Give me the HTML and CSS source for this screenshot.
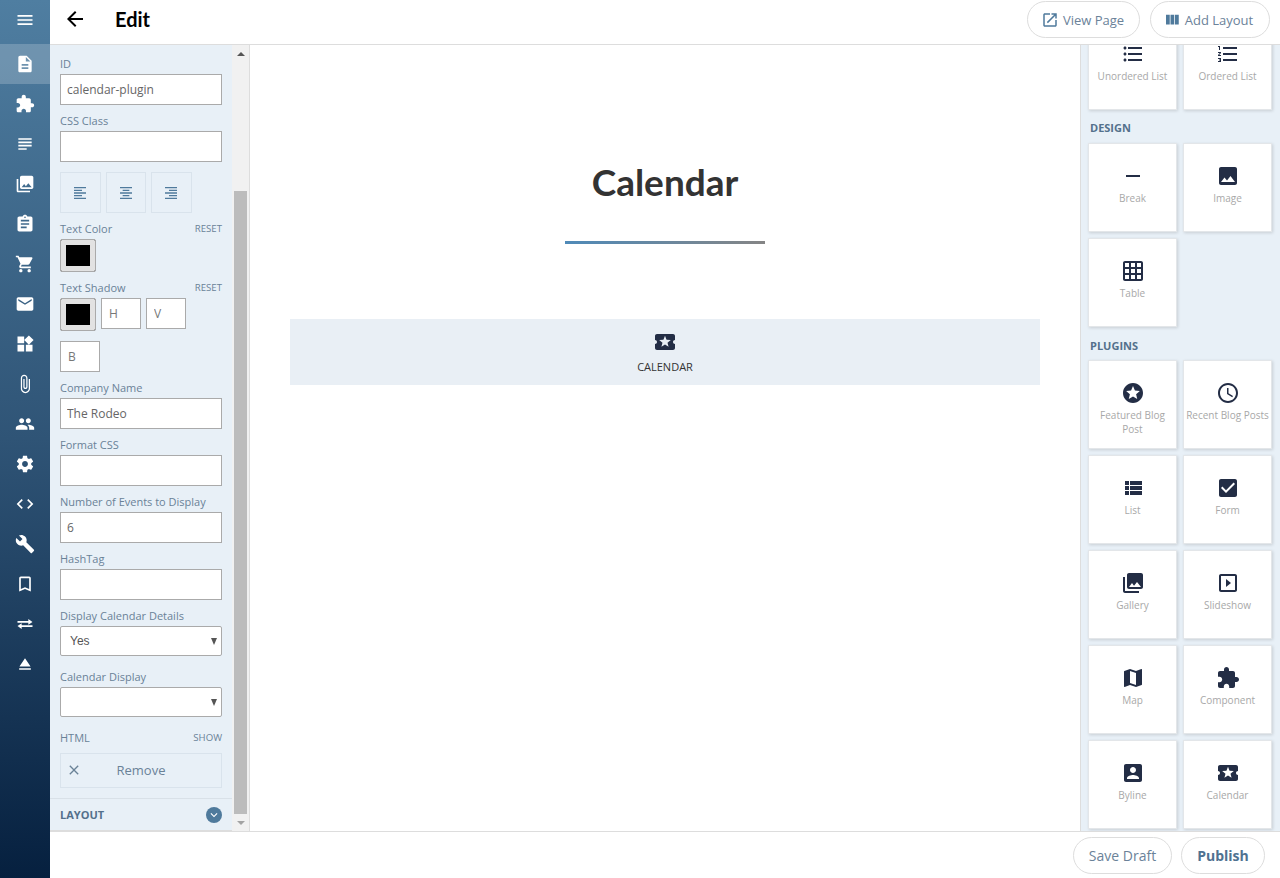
FILE: index.html
```html
<!DOCTYPE html>
<html lang="en">
<head>
<meta charset="utf-8">
<title>Edit</title>
<link rel="stylesheet" href="styles.css">
</head>
<body>
<svg class="sprite" aria-hidden="true">
<symbol id="i-menu" viewBox="0 0 24 24"><path d="M3 18h18v-2H3v2zm0-5h18v-2H3v2zm0-7v2h18V6H3z"/></symbol>
<symbol id="i-doc" viewBox="0 0 24 24"><path d="M14 2H6c-1.1 0-1.99.9-1.99 2L4 20c0 1.1.89 2 1.99 2H18c1.1 0 2-.9 2-2V8l-6-6zm2 16H8v-2h8v2zm0-4H8v-2h8v2zm-3-5V3.5L18.5 9H13z"/></symbol>
<symbol id="i-ext" viewBox="0 0 24 24"><path d="M20.5 11H19V7c0-1.1-.9-2-2-2h-4V3.5C13 2.12 11.88 1 10.5 1S8 2.12 8 3.5V5H4c-1.1 0-1.99.9-1.99 2v3.8H3.5c1.49 0 2.7 1.21 2.7 2.7s-1.21 2.7-2.7 2.7H2V20c0 1.1.9 2 2 2h3.8v-1.5c0-1.49 1.21-2.7 2.7-2.7 1.49 0 2.7 1.21 2.7 2.7V22H17c1.1 0 2-.9 2-2v-4h1.5c1.38 0 2.5-1.12 2.5-2.5S21.88 11 20.5 11z"/></symbol>
<symbol id="i-subject" viewBox="0 0 24 24"><path d="M14 17H4v2h10v-2zm6-8H4v2h16V9zM4 15h16v-2H4v2zM4 5v2h16V5H4z"/></symbol>
<symbol id="i-coll" viewBox="0 0 24 24"><path d="M22 16V4c0-1.1-.9-2-2-2H8c-1.1 0-2 .9-2 2v12c0 1.1.9 2 2 2h12c1.1 0 2-.9 2-2zm-11-4l2.03 2.71L16 11l4 5H8l3-4zM2 6v14c0 1.1.9 2 2 2h14v-2H4V6H2z"/></symbol>
<symbol id="i-assign" viewBox="0 0 24 24"><path d="M19 3h-4.18C14.4 1.84 13.3 1 12 1c-1.3 0-2.4.84-2.82 2H5c-1.1 0-2 .9-2 2v14c0 1.1.9 2 2 2h14c1.1 0 2-.9 2-2V5c0-1.1-.9-2-2-2zm-7 0c.55 0 1 .45 1 1s-.45 1-1 1-1-.45-1-1 .45-1 1-1zm2 14H7v-2h7v2zm3-4H7v-2h10v2zm0-4H7V7h10v2z"/></symbol>
<symbol id="i-cart" viewBox="0 0 24 24"><path d="M7 18c-1.1 0-1.99.9-1.99 2S5.9 22 7 22s2-.9 2-2-.9-2-2-2zM1 2v2h2l3.6 7.59-1.35 2.45c-.16.28-.25.61-.25.96 0 1.1.9 2 2 2h12v-2H7.42c-.14 0-.25-.11-.25-.25l.03-.12.9-1.63h7.45c.75 0 1.41-.41 1.75-1.03l3.58-6.49c.08-.14.12-.31.12-.48 0-.55-.45-1-1-1H5.21l-.94-2H1zm16 16c-1.1 0-1.99.9-1.99 2s.89 2 1.99 2 2-.9 2-2-.9-2-2-2z"/></symbol>
<symbol id="i-mail" viewBox="0 0 24 24"><path d="M20 4H4c-1.1 0-1.99.9-1.99 2L2 18c0 1.1.9 2 2 2h16c1.1 0 2-.9 2-2V6c0-1.1-.9-2-2-2zm0 4l-8 5-8-5V6l8 5 8-5v2z"/></symbol>
<symbol id="i-widgets" viewBox="0 0 24 24"><path d="M13 13v8h8v-8h-8zM3 21h8v-8H3v8zM3 3v8h8V3H3zm13.66-1.31L11 7.34 16.66 13l5.66-5.66-5.66-5.65z"/></symbol>
<symbol id="i-attach" viewBox="0 0 24 24"><path d="M16.5 6v11.5c0 2.21-1.79 4-4 4s-4-1.79-4-4V5c0-1.38 1.12-2.5 2.5-2.5s2.5 1.12 2.5 2.5v10.5c0 .55-.45 1-1 1s-1-.45-1-1V6H10v9.5c0 1.38 1.12 2.5 2.5 2.5s2.5-1.12 2.5-2.5V5c0-2.21-1.79-4-4-4S7 2.79 7 5v12.5c0 3.04 2.46 5.5 5.5 5.5s5.5-2.46 5.5-5.5V6h-1.5z"/></symbol>
<symbol id="i-people" viewBox="0 0 24 24"><path d="M16 11c1.66 0 2.99-1.34 2.99-3S17.66 5 16 5c-1.66 0-3 1.34-3 3s1.34 3 3 3zm-8 0c1.66 0 2.99-1.34 2.99-3S9.66 5 8 5C6.34 5 5 6.34 5 8s1.34 3 3 3zm0 2c-2.33 0-7 1.17-7 3.5V19h14v-2.5c0-2.33-4.67-3.5-7-3.5zm8 0c-.29 0-.62.02-.97.05 1.16.84 1.97 1.97 1.97 3.45V19h6v-2.5c0-2.33-4.67-3.5-7-3.5z"/></symbol>
<symbol id="i-settings" viewBox="0 0 24 24"><path d="M19.43 12.98c.04-.32.07-.64.07-.98s-.03-.66-.07-.98l2.11-1.65c.19-.15.24-.42.12-.64l-2-3.46c-.12-.22-.39-.3-.61-.22l-2.49 1c-.52-.4-1.08-.73-1.69-.98l-.38-2.65C14.46 2.18 14.25 2 14 2h-4c-.25 0-.46.18-.49.42l-.38 2.65c-.61.25-1.17.59-1.69.98l-2.49-1c-.23-.09-.49 0-.61.22l-2 3.46c-.13.22-.07.49.12.64l2.11 1.65c-.04.32-.07.65-.07.98s.03.66.07.98l-2.11 1.65c-.19.15-.24.42-.12.64l2 3.46c.12.22.39.3.61.22l2.49-1c.52.4 1.08.73 1.69.98l.38 2.65c.03.24.24.42.49.42h4c.25 0 .46-.18.49-.42l.38-2.65c.61-.25 1.17-.59 1.69-.98l2.49 1c.23.09.49 0 .61-.22l2-3.46c.12-.22.07-.49-.12-.64l-2.11-1.65zM12 15.5c-1.93 0-3.5-1.57-3.5-3.5s1.57-3.5 3.5-3.5 3.5 1.57 3.5 3.5-1.57 3.5-3.5 3.5z"/></symbol>
<symbol id="i-code" viewBox="0 0 24 24"><path d="M9.4 16.6L4.8 12l4.6-4.6L8 6l-6 6 6 6 1.4-1.4zm5.2 0l4.6-4.6-4.6-4.6L16 6l6 6-6 6-1.4-1.4z"/></symbol>
<symbol id="i-build" viewBox="0 0 24 24"><path d="M22.7 19l-9.1-9.1c.9-2.3.4-5-1.5-6.9-2-2-5-2.4-7.4-1.3L9 6 6 9 1.6 4.7C.4 7.1.9 10.1 2.9 12.1c1.9 1.9 4.6 2.4 6.9 1.5l9.1 9.1c.4.4 1 .4 1.4 0l2.3-2.3c.5-.4.5-1.1.1-1.4z"/></symbol>
<symbol id="i-bookmark" viewBox="0 0 24 24"><path d="M17 3H7c-1.1 0-1.99.9-1.99 2L5 21l7-3 7 3V5c0-1.1-.9-2-2-2zm0 15l-5-2.18L7 18V5h10v13z"/></symbol>
<symbol id="i-compare" viewBox="0 0 24 24"><path d="M3 8.5h13V6l5 3.5-5 3.5v-2.5H3zM21 15.5H8V18l-5-3.5L8 11v2.5h13z"/></symbol>
<symbol id="i-eject" viewBox="0 0 24 24"><path d="M5 17h14v2H5zm7-12L5.33 15h13.34z"/></symbol>
<symbol id="i-back" viewBox="0 0 24 24"><path d="M20 11H7.83l5.59-5.59L12 4l-8 8 8 8 1.41-1.41L7.83 13H20v-2z"/></symbol>
<symbol id="i-open" viewBox="0 0 24 24"><path d="M19 19H5V5h7V3H5c-1.11 0-2 .9-2 2v14c0 1.1.89 2 2 2h14c1.1 0 2-.9 2-2v-7h-2v7zM14 3v2h3.59l-9.83 9.83 1.41 1.41L19 6.41V10h2V3h-7z"/></symbol>
<symbol id="i-columns" viewBox="0 0 24 24"><path d="M10 18h5V5h-5v13zm-6 0h5V5H4v13zM16 5v13h5V5h-5z"/></symbol>
<symbol id="i-ul" viewBox="0 0 24 24"><path d="M4 10.5c-.83 0-1.5.67-1.5 1.5s.67 1.5 1.5 1.5 1.5-.67 1.5-1.5-.67-1.5-1.5-1.5zm0-6c-.83 0-1.5.67-1.5 1.5S3.17 7.5 4 7.5 5.5 6.83 5.5 6 4.83 4.5 4 4.5zm0 12c-.83 0-1.5.68-1.5 1.5s.68 1.5 1.5 1.5 1.5-.68 1.5-1.5-.67-1.5-1.5-1.5zM7 19h14v-2H7v2zm0-6h14v-2H7v2zm0-8v2h14V5H7z"/></symbol>
<symbol id="i-ol" viewBox="0 0 24 24"><path d="M2 17h2v.5H3v1h1v.5H2v1h3v-4H2v1zm1-9h1V4H2v1h1v3zm-1 3h1.8L2 13.1v.9h3v-1H3.2L5 10.9V10H2v1zm5-6v2h14V5H7zm0 14h14v-2H7v2zm0-6h14v-2H7v2z"/></symbol>
<symbol id="i-remove" viewBox="0 0 24 24"><path d="M19 13H5v-2h14v2z"/></symbol>
<symbol id="i-image" viewBox="0 0 24 24"><path fill-rule="evenodd" d="M5 3h14c1.1 0 2 .9 2 2v14c0 1.1-.9 2-2 2H5c-1.1 0-2-.9-2-2V5c0-1.1.9-2 2-2zm3.5 10.5L5 18h14l-4.5-6-3.5 4.5z"/></symbol>
<symbol id="i-grid" viewBox="0 0 24 24"><path d="M20 2H4c-1.1 0-2 .9-2 2v16c0 1.1.9 2 2 2h16c1.1 0 2-.9 2-2V4c0-1.1-.9-2-2-2zM8 20H4v-4h4v4zm0-6H4v-4h4v4zm0-6H4V4h4v4zm6 12h-4v-4h4v4zm0-6h-4v-4h4v4zm0-6h-4V4h4v4zm6 12h-4v-4h4v4zm0-6h-4v-4h4v4zm0-6h-4V4h4v4z"/></symbol>
<symbol id="i-stars" viewBox="0 0 24 24"><path d="M11.99 2C6.47 2 2 6.48 2 12s4.47 10 9.99 10C17.52 22 22 17.52 22 12S17.52 2 11.99 2zm4.24 16L12 15.45 7.77 18l1.12-4.81-3.73-3.23 4.92-.42L12 5l1.92 4.53 4.92.42-3.73 3.23L16.23 18z"/></symbol>
<symbol id="i-clock" viewBox="0 0 24 24"><path d="M11.99 2C6.47 2 2 6.48 2 12s4.47 10 9.99 10C17.52 22 22 17.52 22 12S17.52 2 11.99 2zM12 20c-4.42 0-8-3.58-8-8s3.58-8 8-8 8 3.58 8 8-3.58 8-8 8zm.5-13H11v6l5.25 3.15.75-1.23-4.5-2.67z"/></symbol>
<symbol id="i-list" viewBox="0 0 24 24"><path d="M4 14h4v-4H4v4zm0 5h4v-4H4v4zM4 9h4V5H4v4zm5 5h12v-4H9v4zm0 5h12v-4H9v4zM9 5v4h12V5H9z"/></symbol>
<symbol id="i-check" viewBox="0 0 24 24"><path d="M19 3H5c-1.11 0-2 .9-2 2v14c0 1.1.89 2 2 2h14c1.11 0 2-.9 2-2V5c0-1.1-.89-2-2-2zm-9 14l-5-5 1.41-1.41L10 14.17l7.59-7.59L19 8l-9 9z"/></symbol>
<symbol id="i-slides" viewBox="0 0 24 24"><path d="M10 8v8l5-4-5-4zm9-5H5c-1.1 0-2 .9-2 2v14c0 1.1.9 2 2 2h14c1.1 0 2-.9 2-2V5c0-1.1-.9-2-2-2zm0 16H5V5h14v14z"/></symbol>
<symbol id="i-map" viewBox="0 0 24 24"><path d="M20.5 3l-.16.03L15 5.1 9 3 3.36 4.9c-.21.07-.36.25-.36.48V20.5c0 .28.22.5.5.5l.16-.03L9 18.9l6 2.1 5.64-1.9c.21-.07.36-.25.36-.48V3.5c0-.28-.22-.5-.5-.5zM15 19l-6-2.11V5l6 2.11V19z"/></symbol>
<symbol id="i-account" viewBox="0 0 24 24"><path d="M3 5v14c0 1.1.89 2 2 2h14c1.1 0 2-.9 2-2V5c0-1.1-.9-2-2-2H5c-1.11 0-2 .9-2 2zm12 4c0 1.66-1.34 3-3 3s-3-1.34-3-3 1.34-3 3-3 3 1.34 3 3zm-9 8c0-2 4-3.1 6-3.1s6 1.1 6 3.1v1H6v-1z"/></symbol>
<symbol id="i-ticket" viewBox="0 0 24 24"><path d="M20 12c0-1.1.9-2 2-2V6c0-1.1-.9-2-2-2H4c-1.1 0-1.99.9-1.99 2v4c1.1 0 1.99.9 1.99 2s-.89 2-2 2v4c0 1.1.9 2 2 2h16c1.1 0 2-.9 2-2v-4c-1.1 0-2-.9-2-2zm-4.42 4.8L12 14.5l-3.58 2.3 1.08-4.12-3.29-2.69 4.24-.25L12 5.8l1.54 3.95 4.24.25-3.29 2.69 1.09 4.11z"/></symbol>
<symbol id="i-left" viewBox="0 0 24 24"><path d="M15 15H3v2h12v-2zm0-8H3v2h12V7zM3 13h18v-2H3v2zm0 8h18v-2H3v2zM3 3v2h18V3H3z"/></symbol>
<symbol id="i-center" viewBox="0 0 24 24"><path d="M7 15v2h10v-2H7zm-4 6h18v-2H3v2zm0-8h18v-2H3v2zm4-6v2h10V7H7zM3 3v2h18V3H3z"/></symbol>
<symbol id="i-right" viewBox="0 0 24 24"><path d="M3 21h18v-2H3v2zm6-4h12v-2H9v2zm-6-4h18v-2H3v2zm6-4h12V7H9v2zM3 3v2h18V3H3z"/></symbol>
<symbol id="i-close" viewBox="0 0 24 24"><path d="M19 6.41L17.59 5 12 10.59 6.41 5 5 6.41 10.59 12 5 17.59 6.41 19 12 13.41 17.59 19 19 17.59 13.41 12z"/></symbol>
<symbol id="i-chevron" viewBox="0 0 24 24"><path d="M16.59 8.59L12 13.17 7.41 8.59 6 10l6 6 6-6z"/></symbol>
</svg>

<div class="app">
  <nav class="rail">
    <a class="rail-top"><svg class="rail-icon"><use href="#i-menu"/></svg></a>
    <a class="rail-item active"><svg class="rail-icon"><use href="#i-doc"/></svg></a>
    <a class="rail-item"><svg class="rail-icon"><use href="#i-ext"/></svg></a>
    <a class="rail-item"><svg class="rail-icon"><use href="#i-subject"/></svg></a>
    <a class="rail-item"><svg class="rail-icon"><use href="#i-coll"/></svg></a>
    <a class="rail-item"><svg class="rail-icon"><use href="#i-assign"/></svg></a>
    <a class="rail-item"><svg class="rail-icon"><use href="#i-cart"/></svg></a>
    <a class="rail-item"><svg class="rail-icon"><use href="#i-mail"/></svg></a>
    <a class="rail-item"><svg class="rail-icon"><use href="#i-widgets"/></svg></a>
    <a class="rail-item"><svg class="rail-icon"><use href="#i-attach"/></svg></a>
    <a class="rail-item"><svg class="rail-icon"><use href="#i-people"/></svg></a>
    <a class="rail-item"><svg class="rail-icon"><use href="#i-settings"/></svg></a>
    <a class="rail-item"><svg class="rail-icon"><use href="#i-code"/></svg></a>
    <a class="rail-item"><svg class="rail-icon"><use href="#i-build"/></svg></a>
    <a class="rail-item"><svg class="rail-icon"><use href="#i-bookmark"/></svg></a>
    <a class="rail-item"><svg class="rail-icon"><use href="#i-compare"/></svg></a>
    <a class="rail-item"><svg class="rail-icon"><use href="#i-eject"/></svg></a>
  </nav>

  <div class="main">
    <header class="topbar">
      <svg class="back"><use href="#i-back"/></svg>
      <h1 class="page-title">Edit</h1>
      <div class="top-actions">
        <button class="pill view"><svg class="pill-icon"><use href="#i-open"/></svg>View Page</button>
        <button class="pill add"><svg class="pill-icon"><use href="#i-columns"/></svg>Add Layout</button>
      </div>
    </header>

    <div class="workspace">
      <aside class="props">
        <div class="props-col">
          <div class="props-form">
            <label class="lbl">ID</label>
            <input class="field" value="calendar-plugin">
            <label class="lbl">CSS Class</label>
            <input class="field" value="">
            <div class="align-row">
              <button class="align-btn"><svg><use href="#i-left"/></svg></button>
              <button class="align-btn"><svg><use href="#i-center"/></svg></button>
              <button class="align-btn"><svg><use href="#i-right"/></svg></button>
            </div>
            <div class="lbl split"><span>Text Color</span><span class="mini">RESET</span></div>
            <div class="swatch-row"><span class="swatch"></span></div>
            <div class="lbl split"><span>Text Shadow</span><span class="mini">RESET</span></div>
            <div class="shadow-row">
              <span class="swatch"></span>
              <input class="field small" placeholder="H">
              <input class="field small" placeholder="V">
              <input class="field small" placeholder="B">
            </div>
            <label class="lbl">Company Name</label>
            <input class="field" value="The Rodeo">
            <label class="lbl">Format CSS</label>
            <input class="field" value="">
            <label class="lbl">Number of Events to Display</label>
            <input class="field" value="6">
            <label class="lbl">HashTag</label>
            <input class="field" value="">
            <label class="lbl">Display Calendar Details</label>
            <div class="select">Yes</div>
            <label class="lbl">Calendar Display</label>
            <div class="select"></div>
            <div class="lbl split html-row"><span>HTML</span><span class="mini">SHOW</span></div>
            <button class="remove"><svg><use href="#i-close"/></svg><span>Remove</span></button>
          </div>
          <div class="layout-bar">
            <span>LAYOUT</span>
            <span class="chev"><svg><use href="#i-chevron"/></svg></span>
          </div>
        </div>
        <div class="scrollbar">
          <span class="arrow up"></span>
          <div class="track"><div class="thumb"></div></div>
          <span class="arrow down"></span>
        </div>
      </aside>

      <main class="canvas">
        <h2 class="cal-title">Calendar</h2>
        <div class="divider"></div>
        <div class="plugin-block">
          <svg><use href="#i-ticket"/></svg>
          <span>CALENDAR</span>
        </div>
      </main>

      <aside class="palette">
        <div class="cards clipped">
          <div class="card"><svg><use href="#i-ul"/></svg><span>Unordered List</span></div>
          <div class="card"><svg><use href="#i-ol"/></svg><span>Ordered List</span></div>
        </div>
        <h3 class="pal-head">DESIGN</h3>
        <div class="cards">
          <div class="card"><svg><use href="#i-remove"/></svg><span>Break</span></div>
          <div class="card"><svg><use href="#i-image"/></svg><span>Image</span></div>
          <div class="card"><svg><use href="#i-grid"/></svg><span>Table</span></div>
        </div>
        <h3 class="pal-head plugins">PLUGINS</h3>
        <div class="cards">
          <div class="card"><svg><use href="#i-stars"/></svg><span>Featured Blog Post</span></div>
          <div class="card"><svg><use href="#i-clock"/></svg><span>Recent Blog Posts</span></div>
          <div class="card"><svg><use href="#i-list"/></svg><span>List</span></div>
          <div class="card"><svg><use href="#i-check"/></svg><span>Form</span></div>
          <div class="card"><svg><use href="#i-coll"/></svg><span>Gallery</span></div>
          <div class="card"><svg><use href="#i-slides"/></svg><span>Slideshow</span></div>
          <div class="card"><svg><use href="#i-map"/></svg><span>Map</span></div>
          <div class="card"><svg><use href="#i-ext"/></svg><span>Component</span></div>
          <div class="card"><svg><use href="#i-account"/></svg><span>Byline</span></div>
          <div class="card"><svg><use href="#i-ticket"/></svg><span>Calendar</span></div>
        </div>
      </aside>
    </div>

    <footer class="bottombar">
      <button class="pill draft">Save Draft</button>
      <button class="pill publish">Publish</button>
    </footer>
  </div>
</div>
</body>
</html>
```

FILE: styles.css
```css
* { box-sizing: border-box; }
html, body { margin: 0; height: 100%; overflow: hidden; }
body { font-family: "Open Sans", "Noto Sans", sans-serif; color: #333; background: #fff; }
button, input { font-family: inherit; }
.sprite { display: none; }

.app { display: flex; height: 878px; }

/* Left rail */
.rail {
  width: 50px; flex: none; display: flex; flex-direction: column;
  background: linear-gradient(180deg, #4f7ea1 0%, #2f5476 50%, #06203f 100%);
}
.rail-top { height: 44px; padding-bottom: 4px; display: flex; align-items: center; justify-content: center; }
.rail-item { height: 40px; display: flex; align-items: center; justify-content: center; }
.rail-item.active { background: rgba(255, 255, 255, .2); }
.rail-icon { width: 20px; height: 20px; fill: #fff; }

.main { flex: 1; min-width: 0; display: flex; flex-direction: column; }

/* Header */
.topbar {
  height: 45px; flex: none; display: flex; align-items: center;
  padding: 0 10px 6px 13px; border-bottom: 1px solid #ddd;
}
.back { width: 24px; height: 24px; fill: #000; }
.page-title { margin: 0 0 0 28px; font: 700 20px/24px Lato, sans-serif; color: #000; }
.top-actions { margin-left: auto; display: flex; gap: 10px; }
.pill {
  height: 37px; border: 1px solid #ddd; border-radius: 19px; background: #fff;
  display: inline-flex; align-items: center; justify-content: center; padding: 0;
  font-size: 13px; color: #6b8299;
}
.view { width: 113px; padding: 1px 2px 0 0; }
.add { width: 120px; padding: 1px 4px 0 0; }
.pill-icon { width: 18px; height: 18px; fill: #4f7a9c; margin-right: 4px; }

/* Workspace */
.workspace { flex: 1; min-height: 0; display: flex; }

.props { width: 200px; flex: none; display: flex; border-right: 1px solid #ddd; background: #f1f1f1; }
.props-col { width: 182px; flex: none; display: flex; flex-direction: column; background: #e8f0f7; border-bottom: 1px solid #ddd; }
.props-form { flex: 1; min-height: 0; overflow: hidden; padding: 10px 10px 0; }

.lbl { display: block; height: 19px; font-size: 11px; line-height: 18px; color: #6a8297; }
.split { display: flex; justify-content: space-between; }
.mini { font-size: 9.6px; color: #6a8297; line-height: 18px; }
.field {
  display: block; width: 162px; height: 31px; margin: 0 0 7px; padding: 0 6px;
  border: 1px solid #aaa; border-radius: 0; background: #fff;
  font-size: 12px; color: #666; outline: none;
}
.field::placeholder { color: #777; opacity: 1; }
.align-row { display: flex; gap: 5px; margin: 10px 0 7px; }
.align-btn {
  width: 40.5px; height: 41px; padding: 0; display: flex; align-items: center; justify-content: center;
  background: #e8f0f7; border: 1px solid #d9e3ec;
}
.align-btn svg { width: 16px; height: 16px; fill: #4f7a9c; }
.swatch-row { margin-bottom: 7px; height: 33px; }
.swatch {
  display: block; width: 36px; height: 33px; flex: none;
  border: 1px solid #aaa; border-radius: 2px;
  background: #000; box-shadow: inset 0 0 0 5px #e2e2e2;
}
.shadow-row { display: flex; flex-wrap: wrap; gap: 10px 5px; margin-bottom: 7px; align-items: flex-start; }
.small { width: 40px; margin: 0; padding: 0 7px; }
.select {
  position: relative; height: 30px; width: 162px; margin-bottom: 12px; padding-left: 9px;
  background: #fff; border: 1px solid #aaa; border-radius: 2px;
  font: 12px/28px "Liberation Sans", sans-serif; color: #555;
}
.select::after {
  content: ""; position: absolute; right: 4px; top: 11px;
  border-left: 3.5px solid transparent; border-right: 3.5px solid transparent; border-top: 7px solid #555;
}
.html-row { margin-bottom: 5px; }
.remove {
  position: relative; display: flex; align-items: center; justify-content: center;
  width: 162px; height: 35px; padding: 0 0 2px; background: #e8f0f7; border: 1px solid #d9e3ec;
  font-size: 13px; color: #6a8297;
}
.remove svg { position: absolute; left: 5px; top: 8px; width: 16px; height: 16px; fill: #6a8297; }
.layout-bar {
  height: 32px; flex: none; display: flex; align-items: center; justify-content: space-between;
  padding: 0 10px; border-top: 1px solid #d9e1e8;
  font-size: 11px; font-weight: 700; color: #54718c;
}
.chev { width: 16px; height: 16px; border-radius: 50%; background: #4f7a9c; display: flex; align-items: center; justify-content: center; }
.chev svg { width: 14px; height: 14px; fill: #fff; }

.scrollbar { width: 17px; flex: none; display: flex; flex-direction: column; align-items: center; }
.arrow { height: 17px; flex: none; display: flex; align-items: center; justify-content: center; }
.arrow::before { content: ""; border-left: 4px solid transparent; border-right: 4px solid transparent; }
.up::before { border-bottom: 4px solid #555; }
.down::before { border-top: 4px solid #a3a3a3; }
.track { flex: 1; width: 100%; padding-left: 2px; }
.thumb { width: 13px; height: 623px; margin-top: 129px; background: #bcbcbc; }

/* Canvas */
.canvas { flex: 1; min-width: 0; padding: 0 40px; display: flex; flex-direction: column; align-items: center; }
.cal-title { margin: 113px 0 0; font: 700 37px/48px Lato, sans-serif; color: #333; }
.divider { width: 200px; height: 3px; margin-top: 35px; background: linear-gradient(90deg, #4f8ab8, #858585); }
.plugin-block {
  width: 750px; height: 66px; margin-top: 75px; background: #e9eff5;
  display: flex; flex-direction: column; align-items: center; padding-top: 11px;
  font-size: 11px; color: #333;
}
.plugin-block svg { width: 24px; height: 24px; fill: #232d45; }
.plugin-block span { margin-top: 6px; line-height: 14px; }

/* Palette */
.palette { width: 200px; flex: none; overflow: hidden; background: #e8f0f7; border-left: 1px solid #ddd; padding-left: 7px; }
.cards { display: grid; grid-template-columns: 89px 89px; grid-auto-rows: 89px; gap: 6px; }
.clipped { margin-top: -24px; }
.pal-head { margin: 0; height: 33px; padding: 11px 0 0 2px; font-size: 11px; line-height: 14px; font-weight: 700; color: #54718c; }
.plugins { padding-top: 12px; }
.card {
  background: #fff; border: 1px solid #e3e6e9; box-shadow: 1px 1px 3px rgba(0, 0, 0, .14);
  display: flex; flex-direction: column; align-items: center; padding-top: 20px;
  font-size: 10px; line-height: 14px; color: #a8a8a8; text-align: center;
}
.card svg { width: 24px; height: 24px; fill: #232d45; flex: none; }
.card span { margin-top: 3px; max-width: 84px; }

/* Footer */
.bottombar {
  height: 47px; flex: none; display: flex; align-items: center; justify-content: flex-end; gap: 9px;
  padding: 0 15px; border-top: 1px solid #ddd;
}
.draft { width: 99px; font-size: 14px; }
.publish { width: 84px; font-size: 14px; font-weight: 700; color: #4f7291; }
```
